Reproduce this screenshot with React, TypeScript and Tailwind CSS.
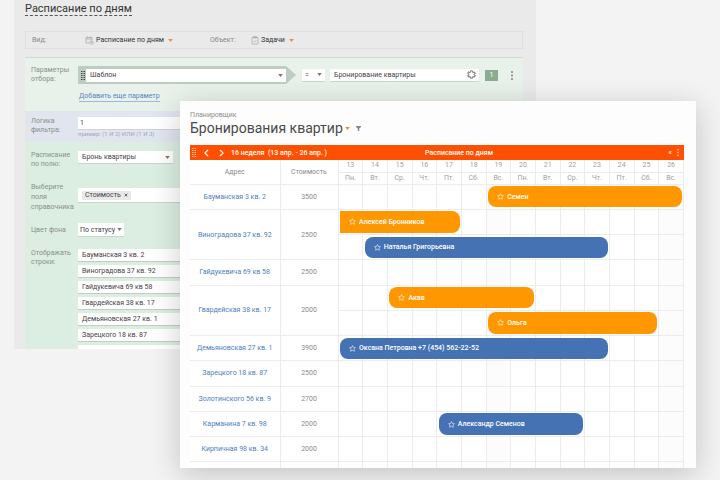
import type { ReactNode } from "react";

const days = [
  ["13", "Пн."], ["14", "Вт."], ["15", "Ср."], ["16", "Чт."], ["17", "Пт."], ["18", "Сб."], ["19", "Вс."],
  ["20", "Пн."], ["21", "Вт."], ["22", "Ср."], ["23", "Чт."], ["24", "Пт."], ["25", "Сб."], ["26", "Вс."],
];

const flats = [
  { name: "Бауманская 3 кв. 2", cost: 3500, lines: 1 },
  { name: "Виноградова 37 кв. 92", cost: 2500, lines: 2 },
  { name: "Гайдукевича 69 кв 58", cost: 2500, lines: 1 },
  { name: "Гвардейская 38 кв. 17", cost: 2000, lines: 2 },
  { name: "Демьяновская 27 кв. 1", cost: 3900, lines: 1 },
  { name: "Зарецкого 18 кв. 87", cost: 2500, lines: 1 },
  { name: "Золотинского 56 кв. 9", cost: 2700, lines: 1 },
  { name: "Карманина 7 кв. 98", cost: 2000, lines: 1 },
  { name: "Кирпичная 98 кв. 34", cost: 2000, lines: 1 },
];

const bookings = [
  { guest: "Семен", place: "col-start-7 col-span-8 row-start-1 rounded-lg bg-[#ff9800]" },
  { guest: "Алексей Бронников", place: "col-start-1 col-span-5 row-start-2 rounded-r-lg bg-[#ff9800]" },
  { guest: "Наталья Григорьевна", place: "col-start-2 col-span-10 row-start-3 rounded-lg bg-[#4472b2]" },
  { guest: "Акав", place: "col-start-3 col-span-6 row-start-5 rounded-lg bg-[#ff9800]" },
  { guest: "Ольга", place: "col-start-7 col-span-7 row-start-6 rounded-lg bg-[#ff9800]" },
  { guest: "Оксана Петровна +7 (454) 562-22-52", place: "col-start-1 col-span-11 row-start-7 rounded-lg bg-[#4472b2]" },
  { guest: "Александр Семенов", place: "col-start-5 col-span-6 row-start-10 rounded-lg bg-[#4472b2]" },
];

const shownRows = [
  "Бауманская 3 кв. 2",
  "Виноградова 37 кв. 92",
  "Гайдукевича 69 кв 58",
  "Гвардейская 38 кв. 17",
  "Демьяновская 27 кв. 1",
  "Зарецкого 18 кв. 87",
];

function Caret({ className }: { className: string }) {
  return (
    <svg viewBox="0 0 6 4" className={`h-[3px] w-[5px] shrink-0 ${className}`} fill="currentColor" aria-hidden="true">
      <path d="M0 0h6L3 4z" />
    </svg>
  );
}

function Star() {
  return (
    <svg viewBox="0 0 24 24" className="size-[7px] shrink-0" fill="none" stroke="currentColor" strokeWidth="2" strokeLinejoin="round" aria-hidden="true">
      <path d="M12 2l3.100 6.500 7 .9-5.100 4.900 1.300 7.100L12 18l-6.300 3.400L7 14.300 1.900 9.400l7-.9z" />
    </svg>
  );
}

function Grip({ className, rows }: { className: string; rows: number[] }) {
  return (
    <svg viewBox="0 0 4 9" className={`h-[9px] w-1 shrink-0 ${className}`} fill="currentColor" aria-hidden="true">
      {rows.map((y) => (
        <path key={y} d={`M0 ${y}h1v1h-1zM1.500 ${y}h1v1h-1zM3 ${y}h1v1h-1z`} />
      ))}
    </svg>
  );
}

function Dots({ className }: { className: string }) {
  return (
    <svg viewBox="0 0 2 9" className={`w-[2px] shrink-0 ${className}`} fill="currentColor" aria-hidden="true">
      <circle cx="1" cy="1" r=".9" />
      <circle cx="1" cy="4.500" r=".9" />
      <circle cx="1" cy="8" r=".9" />
    </svg>
  );
}

function Select({ id, label, value, className }: { id: string; label?: string; value: string; className: string }) {
  return (
    <div className={`grid items-center bg-white ${className}`}>
      <select
        id={id}
        aria-label={label}
        className="col-start-1 row-start-1 h-full w-full appearance-none bg-transparent text-[#444]"
      >
        <option>{value}</option>
      </select>
      <Caret className="pointer-events-none col-start-1 row-start-1 justify-self-end text-[#777]" />
    </div>
  );
}

function Field({ label, htmlFor, className, children }: { label: ReactNode; htmlFor: string; className: string; children: ReactNode }) {
  return (
    <div className={`grid grid-cols-[47px_1fr] pl-[6px] ${className}`}>
      <label htmlFor={htmlFor} className="leading-[9px] text-[#8a908c]">
        {label}
      </label>
      {children}
    </div>
  );
}

function SettingsPanel() {
  return (
    <section className="mr-[184px] ml-[14px] max-h-[349px] overflow-hidden bg-[#eaeaea] pr-[13px] pl-[11px]">
      <h2 className="mt-[3px] w-fit border-b border-dashed border-[#555] text-[11px] leading-[12px] text-[#333]">
        Расписание по дням
      </h2>

      <div className="mt-[15px] flex h-[18px] items-center border border-[#dfdfdf] pl-[6px] text-[#888]">
        <span className="w-[53px]">Вид:</span>
        <button className="flex items-center text-[#333]">
          <svg viewBox="0 0 18 18" className="mr-[2px] size-[9px] text-[#aaa]" fill="none" stroke="currentColor" strokeWidth="1.500" aria-hidden="true">
            <path d="M9 14H2V3h12v5M2 6h12M5 1v3M11 1v3" />
            <circle cx="13" cy="13" r="3.500" />
            <path d="M13 11v2h2" />
          </svg>
          Расписание по дням
          <Caret className="ml-1 text-[#f0883e]" />
        </button>
        <span className="ml-[37px] w-[41px]">Объект:</span>
        <button className="flex items-center text-[#333]">
          <svg viewBox="0 0 16 18" className="mr-[2px] h-[9px] w-2 text-[#aaa]" fill="none" stroke="currentColor" strokeWidth="1.500" aria-hidden="true">
            <path d="M2 3h12v13H2zM5 1h6v3H5zM5 10l2 2 4-4" />
          </svg>
          Задачи
          <Caret className="ml-1 text-[#f0883e]" />
        </button>
      </div>

      <Field label={<>Параметры<br />отбора:</>} htmlFor="template" className="mt-2 h-[54px] border-t border-[#ccdccf] bg-[#e8f1ea] pt-2">
        <div>
          <div className="flex items-center">
            <div className="flex h-[18px] min-w-0 flex-1 items-center bg-[#bdcdc1] pr-[10px] pl-[3px] [clip-path:polygon(0_0,calc(100%-10px)_0,100%_50%,calc(100%-10px)_100%,0_100%)]">
              <Grip className="mr-[1px] text-[#444]" rows={[0, 2, 4, 6, 8]} />
              <Select id="template" value="Шаблон" className="h-[13px] flex-1 pr-[3px] pl-1" />
            </div>
            <Select id="relation" label="Условие" value="=" className="ml-[6px] h-[13px] w-[23px] border-b border-[#ccd5ce] pr-[3px] pl-[3px]" />
            <div className="ml-[5px] flex h-[13px] w-[149px] items-center border-b border-[#ccd5ce] bg-white pr-[3px] pl-1">
              <input aria-label="Значение" defaultValue="Бронирование квартиры" className="min-w-0 flex-1 bg-transparent text-[#444]" />
              <button aria-label="Настроить значение" className="text-[#888]">
                <svg viewBox="0 0 24 24" className="size-[9px]" fill="none" stroke="currentColor" strokeWidth="3" strokeLinejoin="round" aria-hidden="true">
                  <path d="M10 2h4l.6 3.200 2.200 1.200 3.100-1.100 2 3.500-2.500 2.100v2.300l2.500 2.100-2 3.500-3.100-1.100-2.200 1.200L14 22h-4l-.6-3.100-2.200-1.200-3.100 1.100-2-3.500 2.500-2.100v-2.300L2.100 8.800l2-3.500 3.100 1.100 2.200-1.200z" />
                </svg>
              </button>
            </div>
            <span className="ml-[6px] h-[11px] w-[13px] bg-[#8cac90] text-center leading-[11px] text-white">1</span>
            <button aria-label="Действия с параметром" className="mr-[10px] ml-[13px]">
              <Dots className="h-[9px] text-[#777]" />
            </button>
          </div>
          <a href="#add" className="mt-[8px] ml-[1px] inline-block border-b border-[#9db7da] leading-[9px] text-[#5b83bd]">
            Добавить еще параметр
          </a>
        </div>
      </Field>

      <Field label={<>Логика<br />фильтра:</>} htmlFor="logic" className="h-[31px] bg-[#e0e5ee] pt-[6px]">
        <div>
          <input id="logic" defaultValue="1" className="block h-[13px] w-full border-b border-[#ccd1da] bg-white px-[2px] text-[#444]" />
          <p className="text-[6px] leading-[8px] text-[#a5a9b1]">пример: (1 И 2) ИЛИ (1 И 3)</p>
        </div>
      </Field>

      <div className="bg-[#dceee1] pt-[9px]">
        <Field label={<>Расписание<br />по полю:</>} htmlFor="schedule-field" className="">
          <Select id="schedule-field" value="Бронь квартиры" className="h-[13px] w-[95px] border-b border-[#c5d6ca] pr-[3px] pl-1" />
        </Field>
        <div className="mt-[13px] grid grid-cols-[47px_1fr] pl-[6px]">
          <span className="leading-[10px] text-[#8a908c]">Выберите<br />поля<br />справочника</span>
          <div className="mt-[6px] flex h-[15px] items-center border-b border-[#c5d6ca] bg-white pl-1">
            <button aria-label="Убрать поле Стоимость" className="flex h-[9px] items-center gap-[3px] bg-[#e9e9e9] px-[3px] leading-[9px] text-[#444]">
              Стоимость
              <svg viewBox="0 0 6 6" className="size-1" stroke="currentColor" strokeWidth="1.200" aria-hidden="true">
                <path d="M1 1l4 4M5 1L1 5" />
              </svg>
            </button>
          </div>
        </div>
        <Field label="Цвет фона" htmlFor="background" className="mt-[11px] items-center">
          <Select id="background" value="По статусу" className="h-[14px] w-[46px] border-b border-[#c5d6ca] pr-[2px] pl-[2px]" />
        </Field>
        <div className="mt-3 grid grid-cols-[47px_1fr] pl-[6px]">
          <span className="leading-[9px] text-[#8a908c]">Отображать<br />строки:</span>
          <ul className="flex flex-col gap-[3px] text-[#444]">
            {shownRows.map((row) => (
              <li key={row} className="h-[13px] border-b border-[#bfcfc4] bg-white pl-1 leading-[13px]">{row}</li>
            ))}
            <li className="h-[13px] bg-white" />
          </ul>
        </div>
      </div>
    </section>
  );
}

function Planner() {
  return (
    <main className="absolute top-[101px] right-6 left-[180px] bg-[#fdfdfd] px-[10px] pt-[10px] shadow-[0_6px_28px_rgba(0,0,0,0.2)]">
      <p className="leading-[9px] text-[#8d8d8d]">Планировщик</p>
      <div className="flex items-center">
        <h1 className="text-[14px] leading-[16px] text-[#4a4a4a]">Бронирования квартир</h1>
        <button aria-label="Выбрать вид" className="ml-[2px]">
          <Caret className="text-[#f58220]" />
        </button>
        <button aria-label="Фильтр" className="ml-[6px] text-[#888]">
          <svg viewBox="0 0 10 10" className="size-[5px]" fill="currentColor" aria-hidden="true">
            <path d="M0 0h10v2L6.500 5v5h-3V5L0 2z" />
          </svg>
        </button>
      </div>

      <div className="mt-[9px] mr-[2px]">
        <div className="grid h-[15px] grid-cols-[1fr_auto_1fr] items-center bg-[#ff4f00] px-[2px] font-medium text-white">
          <div className="flex items-center">
            <Grip className="text-[#ffc4a8]" rows={[0, 2, 4, 6, 8]} />
            <button aria-label="Назад" className="ml-2">
              <svg viewBox="0 0 6 10" className="h-2 w-[5px]" fill="none" stroke="currentColor" strokeWidth="1.500" aria-hidden="true">
                <path d="M5 1L1 5l4 4" />
              </svg>
            </button>
            <button aria-label="Вперед" className="mr-[7px] ml-[10px]">
              <svg viewBox="0 0 6 10" className="h-2 w-[5px]" fill="none" stroke="currentColor" strokeWidth="1.500" aria-hidden="true">
                <path d="M1 1l4 4-4 4" />
              </svg>
            </button>
            16 неделя&nbsp; (13 апр. - 26 апр. )
          </div>
          <span className="ml-11">Расписание по дням</span>
          <div className="flex items-center justify-end gap-[5px] pr-[3px]">
            <button aria-label="Свернуть">«</button>
            <button aria-label="Меню">
              <Dots className="h-[7px]" />
            </button>
          </div>
        </div>

        <div className="relative">
          <table className="h-[308px] w-full table-fixed border-collapse bg-white text-center text-[#8a8a8a]">
            <colgroup>
              <col className="w-[90px]" />
              <col className="w-[58px]" />
              {days.map(([date]) => (
                <col key={date} />
              ))}
            </colgroup>
            <thead>
              <tr className="h-3">
                <th rowSpan={2} className="border-r border-b border-[#ececec] p-0 font-normal">Адрес</th>
                <th rowSpan={2} className="border-r border-b border-[#ececec] p-0 font-normal">Стоимость</th>
                {days.map(([date]) => (
                  <th key={date} className="border-r border-b border-[#ececec] p-0 leading-[11px] font-normal text-[#a0a0a0]">{date}</th>
                ))}
              </tr>
              <tr className="h-3">
                {days.map(([date, weekday]) => (
                  <th key={date} className="border-r border-b border-[#ececec] p-0 leading-[11px] font-normal text-[#a0a0a0]">{weekday}</th>
                ))}
              </tr>
            </thead>
            <tbody>
              {flats.flatMap((flat) =>
                Array.from({ length: flat.lines }, (_, line) => (
                  <tr key={`${flat.name}-${line}`} className="h-[25px]">
                    {line === 0 && (
                      <>
                        <td rowSpan={flat.lines} className="border-r border-b border-[#ececec] p-0">
                          <a href="#flat" className="text-[#4f7ec0]">{flat.name}</a>
                        </td>
                        <td rowSpan={flat.lines} className="border-r border-b border-[#ececec] p-0">{flat.cost}</td>
                      </>
                    )}
                    {days.map(([date, weekday]) => (
                      <td key={date} className={`border-r border-b border-[#ececec] p-0 ${weekday === "Вс." ? "bg-[#fcfcfc]" : ""}`} />
                    ))}
                  </tr>
                )),
              )}
              <tr className="h-[6px]">
                <td className="border-r border-[#ececec] p-0" />
                <td className="border-r border-[#ececec] p-0" />
                {days.map(([date, weekday]) => (
                  <td key={date} className={`border-r border-[#ececec] p-0 ${weekday === "Вс." ? "bg-[#fcfcfc]" : ""}`} />
                ))}
              </tr>
            </tbody>
          </table>

          <div className="absolute top-6 right-0 bottom-[6px] left-[148px] grid grid-cols-14 grid-rows-11">
            {bookings.map(({ guest, place }) => (
              <button key={guest} className={`m-[2px] flex items-center gap-[3px] pl-[9px] text-left font-medium whitespace-nowrap text-white ${place}`}>
                <Star />
                {guest}
              </button>
            ))}
          </div>
        </div>
      </div>
    </main>
  );
}

export default function App() {
  return (
    <div className="relative flow-root min-h-screen overflow-hidden bg-[#f3f3f3] font-[Roboto,'Noto_Sans',sans-serif] text-[7px] leading-[10px]">
      <SettingsPanel />
      <Planner />
    </div>
  );
}
